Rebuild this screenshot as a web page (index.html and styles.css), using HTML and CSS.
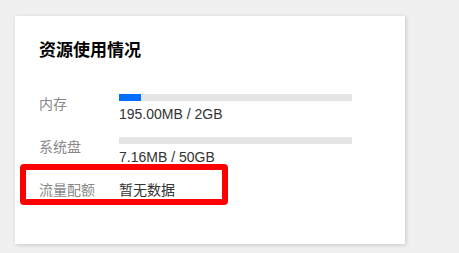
FILE: index.html
```html
<!DOCTYPE html>
<html lang="zh">
<head>
<meta charset="utf-8">
<title>资源使用情况</title>
<link rel="stylesheet" href="styles.css">
</head>
<body>
<div class="card">
  <h2 class="title">资源使用情况</h2>
  <div class="rows">
    <div class="row">
      <div class="label">内存</div>
      <div class="value">
        <div class="bar"><div class="fill" style="width:9.5%"></div></div>
        <div class="text">195.00MB / 2GB</div>
      </div>
    </div>
    <div class="row">
      <div class="label">系统盘</div>
      <div class="value">
        <div class="bar"><div class="fill" style="width:0%"></div></div>
        <div class="text">7.16MB / 50GB</div>
      </div>
    </div>
    <div class="row quota">
      <div class="label">流量配额</div>
      <div class="value">
        <div class="text plain">暂无数据</div>
      </div>
    </div>
  </div>
  <div class="highlight"></div>
</div>
</body>
</html>
```

FILE: styles.css
```css
html, body {
  margin: 0;
  padding: 0;
}
body {
  background: #f0f0f0;
  font-family: "Liberation Sans", "Noto Sans CJK SC", sans-serif;
  padding: 16px 0 0 15px;
  height: 253px;
  box-sizing: border-box;
  overflow: hidden;
}
.card {
  position: relative;
  width: 390px;
  height: 228px;
  box-sizing: border-box;
  background: #fff;
  box-shadow: 1px 1px 4px rgba(0, 0, 0, 0.18);
  padding: 23px 0 0 24px;
}
.title {
  margin: 0;
  font-size: 17px;
  line-height: 24px;
  font-weight: bold;
  color: #000;
}
.rows {
  margin-top: 31px;
  display: flex;
  flex-direction: column;
  gap: 13px;
}
.row {
  display: flex;
  align-items: flex-start;
}
.label {
  width: 80px;
  font-size: 14px;
  line-height: 20px;
  color: #888;
}
.value {
  width: 233px;
}
.bar {
  height: 7px;
  background: #e5e5e5;
}
.fill {
  height: 100%;
  background: #006eff;
}
.text {
  margin-top: 3px;
  font-size: 14px;
  line-height: 20px;
  color: #333;
}
.text.plain {
  margin-top: 0;
}
.highlight {
  position: absolute;
  left: 5px;
  top: 148px;
  width: 208px;
  height: 41px;
  box-sizing: border-box;
  border: 6px solid #ff0000;
  border-radius: 4px;
}
```
